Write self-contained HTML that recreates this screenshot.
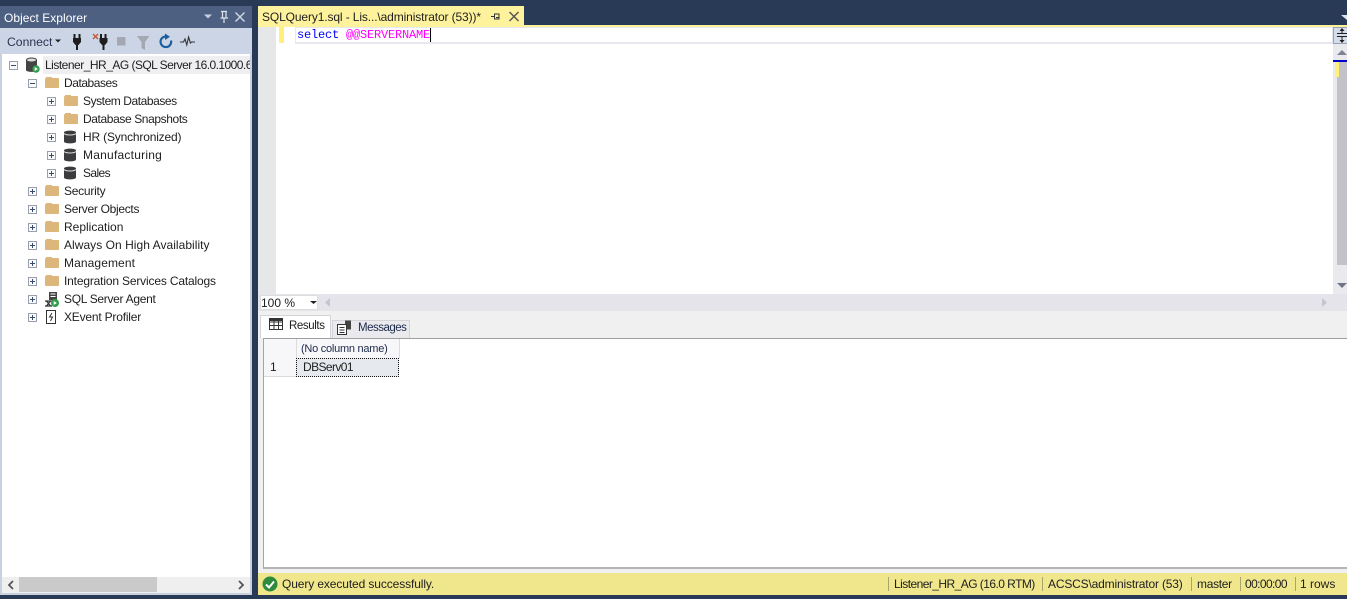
<!DOCTYPE html>
<html><head><meta charset="utf-8"><style>
html,body{margin:0;padding:0}
body{width:1347px;height:599px;overflow:hidden;background:#293a56;position:relative;font:12px "Liberation Sans",sans-serif;color:#1e1e1e}
div,svg{position:absolute}
.t{white-space:nowrap;line-height:16px;height:16px}
.e{width:7px;height:7px;margin-top:1px;border:1px solid #98a0ae;background:#fafafa}
.e:before{content:"";position:absolute;left:1px;top:3px;width:5px;height:1px;background:#3a4a6a}
.p:after{content:"";position:absolute;left:3px;top:1px;width:1px;height:5px;background:#3a4a6a}
.f{width:14px;height:10px;margin-top:-1px;background:#dcb67a;border-radius:1px}
.f:before{content:"";position:absolute;left:1px;top:-1px;width:6px;height:1px;background:#dcb67a}
.sep{width:1px;height:14px;background:#a8a46c;top:577px}
</style></head><body>
<!-- Object explorer -->
<div style="left:0;top:6px;width:252px;height:22px;background:#4d6082"></div>
<div class="t" style="left:4px;top:10px;color:#fff;font-size:12px;letter-spacing:.03px">Object Explorer</div>
<svg style="left:200px;top:8px" width="52" height="18" viewBox="0 0 52 18"><path d="M4 6.500h8l-4 4z" fill="#c5cfdf"/><path d="M21 3.500h6M22.500 4v6M26 4v6M20.500 10h7.500M24 10v5" stroke="#dde3ec" stroke-width="1.200" fill="none"/><path d="M35.500 4.500l9 9M44.500 4.500l-9 9" stroke="#ccd5e3" stroke-width="1.500"/></svg>
<div style="left:0;top:28px;width:252px;height:26px;background:#ccd5e6"></div>
<div class="t" style="left:7px;top:34px;color:#2a3350;font-size:12.2px">Connect</div>
<svg style="left:55px;top:39px" width="7" height="5"><path d="M0 0.500h6l-3 3z" fill="#222"/></svg>
<svg style="left:70px;top:32px" width="130" height="20" viewBox="0 0 130 20">
<path d="M4.500 2v5M9.500 2v5" stroke="#1e1e1e" stroke-width="2"/><path d="M3 6h8v4l-2.500 3h-3l-2.500-3z" fill="#1e1e1e"/><path d="M7 12v6" stroke="#1e1e1e" stroke-width="2"/>
<path d="M23 2l5 5M28 2l-5 5" stroke="#c5532d" stroke-width="1.300"/><path d="M31 2v5M35.500 2v5" stroke="#1e1e1e" stroke-width="2"/><path d="M29.500 6h8v4l-2.500 3h-3l-2.500-3z" fill="#1e1e1e"/><path d="M33.500 12v6" stroke="#1e1e1e" stroke-width="2"/>
<rect x="47" y="5" width="8.500" height="8.500" fill="#a3a8b2"/>
<path d="M67 4h12.500l-4.500 6v8l-3.500-2v-6z" fill="#a3a8b2"/>
<path d="M98.200 5a5.300 5.300 0 1 0 2.800 3.500" stroke="#1b5e9e" stroke-width="2.200" fill="none"/><path d="M95 1.500v6.500l5-3.200z" fill="#1b5e9e"/>
<path d="M110 10h3.500l1.500-3 1.800 6 1.800-8 1.800 6 1.200-1h3.400" stroke="#333" stroke-width="1.100" fill="none"/></svg>
<div style="left:0;top:54px;width:250px;height:523px;background:#fff"></div>
<div style="left:250px;top:54px;width:2px;height:541px;background:#c9d1e0"></div>
<div style="left:0;top:54px;width:2px;height:541px;background:#c9d1e0"></div>
<div style="left:43px;top:56px;width:207px;height:18px;background:#efeff1"></div>
<div class="e" style="left:9px;top:60px"></div>
<svg style="left:25px;top:57px" width="16" height="16" viewBox="0 0 16 16"><path d="M1 3c0-3.400 11-3.400 11 0v10c0 2.500-11 2.500-11 0z" fill="#444"/><ellipse cx="6.500" cy="3" rx="4.500" ry="1.500" fill="#ddd"/><circle cx="11" cy="12" r="3.700" fill="#2e9e4a"/><path d="M9.700 10v4l3.200-2z" fill="#fff"/></svg>
<div class="t" style="left:45px;top:57px;width:205px;overflow:hidden;letter-spacing:-.55px"><span style="letter-spacing:-.5px">Listener_HR_AG</span> (SQL Server 16.0.1000.6</div>
<div class="e" style="left:28px;top:78px"></div><div class="f" style="left:45px;top:79px"></div><div class="t" style="left:64px;top:75px;letter-spacing:-.45px">Databases</div>
<div class="e p" style="left:47px;top:96px"></div><div class="f" style="left:64px;top:97px"></div><div class="t" style="left:83px;top:93px;letter-spacing:-.44px">System Databases</div>
<div class="e p" style="left:47px;top:114px"></div><div class="f" style="left:64px;top:115px"></div><div class="t" style="left:83px;top:111px;letter-spacing:-.39px">Database Snapshots</div>
<div class="e p" style="left:47px;top:132px"></div><svg style="left:63px;top:130px" width="14" height="14"><path d="M1 2.500c0-2.500 12-2.500 12 0v9c0 2.500-12 2.500-12 0z" fill="#3c3c3e"/><path d="M1 3.500c2 2 10 2 12 0" stroke="#ddd" fill="none"/></svg><div class="t" style="left:83px;top:129px;letter-spacing:-.18px">HR (Synchronized)</div>
<div class="e p" style="left:47px;top:150px"></div><svg style="left:63px;top:148px" width="14" height="14"><path d="M1 2.500c0-2.500 12-2.500 12 0v9c0 2.500-12 2.500-12 0z" fill="#3c3c3e"/><path d="M1 3.500c2 2 10 2 12 0" stroke="#ddd" fill="none"/></svg><div class="t" style="left:83px;top:147px;letter-spacing:.23px">Manufacturing</div>
<div class="e p" style="left:47px;top:168px"></div><svg style="left:63px;top:166px" width="14" height="14"><path d="M1 2.500c0-2.500 12-2.500 12 0v9c0 2.500-12 2.500-12 0z" fill="#3c3c3e"/><path d="M1 3.500c2 2 10 2 12 0" stroke="#ddd" fill="none"/></svg><div class="t" style="left:83px;top:165px;letter-spacing:-.6px">Sales</div>
<div class="e p" style="left:28px;top:186px"></div><div class="f" style="left:45px;top:187px"></div><div class="t" style="left:64px;top:183px;letter-spacing:-.25px">Security</div>
<div class="e p" style="left:28px;top:204px"></div><div class="f" style="left:45px;top:205px"></div><div class="t" style="left:64px;top:201px;letter-spacing:-.3px">Server Objects</div>
<div class="e p" style="left:28px;top:222px"></div><div class="f" style="left:45px;top:223px"></div><div class="t" style="left:64px;top:219px">Replication</div>
<div class="e p" style="left:28px;top:240px"></div><div class="f" style="left:45px;top:241px"></div><div class="t" style="left:64px;top:237px;letter-spacing:.04px">Always On High Availability</div>
<div class="e p" style="left:28px;top:258px"></div><div class="f" style="left:45px;top:259px"></div><div class="t" style="left:64px;top:255px;letter-spacing:.1px">Management</div>
<div class="e p" style="left:28px;top:276px"></div><div class="f" style="left:45px;top:277px"></div><div class="t" style="left:64px;top:273px;letter-spacing:-.17px">Integration Services Catalogs</div>
<div class="e p" style="left:28px;top:294px"></div><svg style="left:45px;top:292px" width="15" height="15"><rect x="4" y="0" width="8" height="8" fill="#444"/><path d="M5.500 2h5M5.500 4.500h5" stroke="#fff"/><path d="M0 9h7M0 14h7M1.500 9l4 5M5.500 9l-4 5" stroke="#333" stroke-width="1.300"/><circle cx="10" cy="11" r="4" fill="#2e9e4a"/><path d="M8.700 9v4l3.200-2z" fill="#fff"/></svg><div class="t" style="left:64px;top:291px;letter-spacing:-.3px">SQL Server Agent</div>
<div class="e p" style="left:28px;top:312px"></div><svg style="left:45px;top:310px" width="12" height="14"><rect x="1.500" y="0.500" width="9" height="13" fill="#fff" stroke="#333"/><path d="M7 3l-2.500 4h3l-2 4" stroke="#333" fill="none"/></svg><div class="t" style="left:64px;top:309px;letter-spacing:-.2px">XEvent Profiler</div>
<!-- OE hscroll -->
<div style="left:2px;top:577px;width:248px;height:16px;background:#efefef"></div>
<div style="left:19px;top:577px;width:138px;height:15px;background:#cacaca"></div>
<svg style="left:6px;top:579px" width="244" height="12"><path d="M7 2l-4 4 4 4M233 2l4 4-4 4" stroke="#555" stroke-width="1.800" fill="none"/></svg>
<div style="left:0;top:593px;width:252px;height:2px;background:#c9d1e0"></div>
<!-- Tab -->
<div style="left:258px;top:6px;width:266px;height:19px;background:#fff29d"></div>
<div class="t" style="left:262px;top:9px;color:#1e1e1e;font-size:12px;letter-spacing:-.12px">SQLQuery1.sql - Lis...\administrator (53))*</div>
<svg style="left:489px;top:10px" width="32" height="13"><path d="M2 6.500h3M5.500 3.500v6M5.500 4h4.500v5h-4.500M7 7.500h3" stroke="#333" fill="none"/><path d="M20.500 2l9 9M29.500 2l-9 9" stroke="#555" stroke-width="1.500"/></svg>
<svg style="left:1341px;top:14px" width="6" height="6"><path d="M0 1h6v5z" fill="#dfe4ec"/></svg>
<!-- Editor -->
<div style="left:258px;top:25px;width:1089px;height:2px;background:#fff29d"></div>
<div style="left:258px;top:27px;width:1075px;height:267px;background:#fff"></div>
<div style="left:258px;top:27px;width:18px;height:267px;background:#e6e7e8"></div>
<div style="left:279px;top:27px;width:5px;height:16px;background:#fff07a"></div>
<div style="left:295px;top:27px;width:1036px;height:14px;border:1px solid #e8e8f0;border-width:1px 2px 2px 1px"></div>
<div class="t" style="left:297px;top:27px;font:12px/16px 'Liberation Mono',monospace;color:#00f;letter-spacing:-.2px;height:16px">select <span style="color:#f0f">@@SERVERNAME</span></div>
<div style="left:430px;top:28px;width:1px;height:14px;background:#000"></div>
<!-- right scrollbar -->
<div style="left:1333px;top:27px;width:14px;height:267px;background:#e9e9ee"></div>
<div style="left:1333px;top:27px;width:14px;height:17px;background:#d5dcea;border:1px solid #9aa2b2;border-right:0;box-sizing:border-box"></div>
<svg style="left:1337px;top:28px" width="10" height="15"><path d="M0 5.500h10M0 8.500h10M5 2v3M5 9v4" stroke="#1e1e1e"/><path d="M2.500 3l2.500-3 2.500 3zM2.500 12l2.500 3 2.500-3z" fill="#1e1e1e"/></svg>
<svg style="left:1337px;top:49px" width="10" height="6"><path d="M0 6l5-5 5 5z" fill="#7d8494"/></svg>
<div style="left:1333px;top:60px;width:14px;height:2px;background:#00c"></div>
<div style="left:1337px;top:62px;width:10px;height:203px;background:#c2c3c9"></div>
<div style="left:1335px;top:62px;width:4px;height:15px;background:#fff07a"></div>
<svg style="left:1337px;top:283px" width="10" height="6"><path d="M0 0h10l-5 5z" fill="#6f7585"/></svg>
<!-- zoom bar -->
<div style="left:258px;top:294px;width:1089px;height:17px;background:#e4e4ea"></div>
<div style="left:260px;top:295px;width:58px;height:15px;background:#fff;border:1px solid #ddd;box-sizing:border-box"></div>
<div class="t" style="left:261px;top:295px;">100 %</div>
<svg style="left:310px;top:300px" width="7" height="5"><path d="M0 1h7l-3.500 3z" fill="#222"/></svg>
<svg style="left:325px;top:297px" width="6" height="12"><path d="M5 1v9l-5-4.500z" fill="#c4c6cf"/></svg>
<svg style="left:1322px;top:297px" width="6" height="12"><path d="M0 1v9l5-4.500z" fill="#c4c6cf"/></svg>
<!-- results -->
<div style="left:258px;top:311px;width:1089px;height:262px;background:#f0f0f0"></div>
<div style="left:260px;top:315px;width:71px;height:23px;background:#fff;border:1px solid #d4d4d8;border-bottom:0;box-sizing:border-box"></div>
<div style="left:332px;top:320px;width:78px;height:18px;background:#eaeaee;border:1px solid #d4d4d8;border-bottom:0;box-sizing:border-box"></div>
<svg style="left:269px;top:318px" width="14" height="13"><path d="M.5.500h13v11h-13zM.5 4h13M.5 7.500h13M5 .500v11M9.500.500v11" fill="none" stroke="#333"/><rect x="0" y="0" width="14" height="3" fill="#333"/></svg>
<svg style="left:337px;top:320px" width="15" height="15"><rect x="8" y="0.500" width="6" height="9" fill="#444"/><path d="M.5 4.500h9v10h-9z" fill="#fff" stroke="#333"/><path d="M2.500 7.500h5M2.500 10h5M2.500 12.500h5" stroke="#333"/></svg>
<div class="t" style="left:289px;top:318px;font-size:11.5px;letter-spacing:-.4px">Results</div>
<div class="t" style="left:358px;top:320px;font-size:11.5px;letter-spacing:-.5px;color:#1e2a4a">Messages</div>
<div style="left:263px;top:338px;width:1084px;height:231px;background:#fff;border-top:1px solid #9f9f9f;border-bottom:2px solid #b5b5b5;border-left:1px solid #a5a5a5;box-sizing:border-box"></div>
<div style="left:264px;top:339px;width:136px;height:19px;background:#f7f7f9"></div>
<div style="left:264px;top:358px;width:32px;height:19px;background:#f7f7f9"></div>
<div style="left:296px;top:339px;width:1px;height:38px;background:#dcdcdc"></div>
<div style="left:399px;top:339px;width:1px;height:19px;background:#dcdcdc"></div>
<div style="left:264px;top:376px;width:32px;height:1px;background:#dcdcdc"></div>
<div style="left:296px;top:358px;width:103px;height:19px;background:#e6eaee;border:1px dotted #111;box-sizing:border-box"></div>
<div class="t" style="left:301px;top:341px;font-size:11px;letter-spacing:-.25px;color:#1e2a4a">(No column name)</div>
<div class="t" style="left:270px;top:359px;font-size:12px">1</div>
<div class="t" style="left:303px;top:359px;font-size:12px;letter-spacing:-.6px">DBServ01</div>
<!-- status bar -->
<div style="left:258px;top:573px;width:1089px;height:22px;background:#f0e68c"></div>
<svg style="left:262px;top:576px" width="16" height="16"><circle cx="8" cy="8" r="7.500" fill="#2e8b3d"/><path d="M4 8.500l3 3 5-6" stroke="#fff" stroke-width="2" fill="none"/></svg>
<div class="t" style="left:282px;top:576px;letter-spacing:-.11px">Query executed successfully.</div>
<div class="sep" style="left:888px"></div><div class="t" style="left:894px;top:576px;letter-spacing:-.55px">Listener_HR_AG (16.0 RTM)</div>
<div class="sep" style="left:1042px"></div><div class="t" style="left:1048px;top:576px;letter-spacing:-.17px">ACSCS\administrator (53)</div>
<div class="sep" style="left:1191px"></div><div class="t" style="left:1197px;top:576px;letter-spacing:-.3px">master</div>
<div class="sep" style="left:1240px"></div><div class="t" style="left:1245px;top:576px;letter-spacing:-.6px">00:00:00</div>
<div class="sep" style="left:1295px"></div><div class="t" style="left:1300px;top:576px">1 rows</div>
</body></html>
